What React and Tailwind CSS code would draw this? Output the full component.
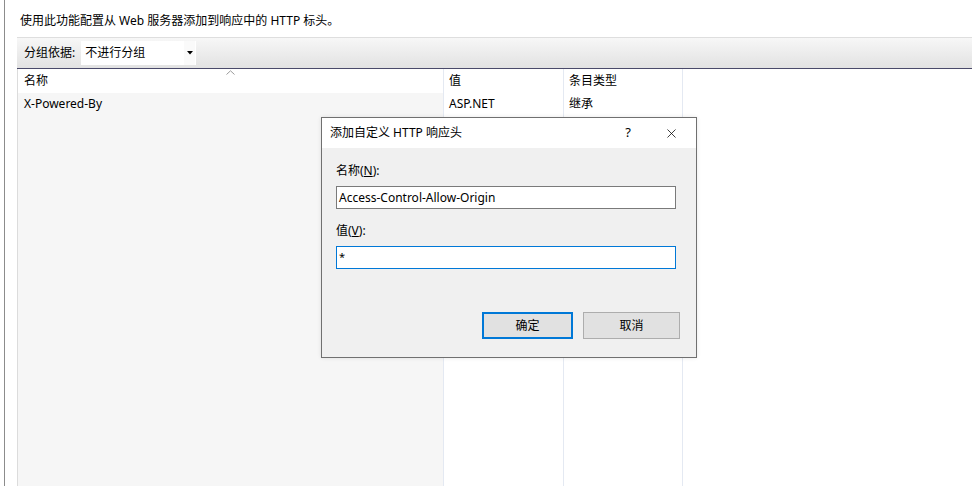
import { X } from "lucide-react";

const font = { fontFamily: '"Noto Sans", "Noto Sans CJK SC", sans-serif' };

function Dialog() {
  return (
    <div className="absolute left-[321px] top-[117px] w-[376px] h-[241px] border border-[#707070] bg-[#f0f0f0] flex flex-col shadow-[0_0_4px_rgba(0,0,0,0.1)]">
      {/* title bar */}
      <div className="h-[30px] bg-white flex items-center pl-[8px] text-[12px] text-black">
        <span className="flex-1">添加自定义 HTTP 响应头</span>
        <span className="w-[20px] text-center mr-[26px] text-[13px]">?</span>
        <X size={15} strokeWidth={1.2} className="mr-[17px]" />
      </div>
      <div className="flex-1 px-[14px] pt-[15px] text-[12px]">
        <div className="leading-[16px]">
          名称(<span className="underline">N</span>):
        </div>
        <div className="mt-[7px] h-[23px] w-[340px] bg-white border border-[#7a7a7a] flex items-center px-[2px]">
          Access-Control-Allow-Origin
        </div>
        <div className="mt-[14px] leading-[16px]">
          值(<span className="underline">V</span>):
        </div>
        <div className="mt-[7px] h-[23px] w-[340px] bg-white border border-[#0078d7] flex items-center px-[2px] text-[11px]">
          *
        </div>
        <div className="mt-[43px] flex justify-end gap-[10px] pr-[2px]">
          <button className="w-[91px] h-[27px] bg-[#e1e1e1] border-2 border-[#0078d7] text-[12px]">
            确定
          </button>
          <button className="w-[97px] h-[27px] bg-[#e1e1e1] border border-[#adadad] text-[12px]">
            取消
          </button>
        </div>
      </div>
    </div>
  );
}

export default function App() {
  return (
    <div className="w-[972px] h-[486px] bg-white relative overflow-hidden text-black" style={font}>
      <div className="ml-[4px] h-full border-l border-[#8c8c8c] flex flex-col">
        <div className="h-[37px] pl-[15px] pt-[12px] text-[12px] leading-[18px]">
          使用此功能配置从 Web 服务器添加到响应中的 HTTP 标头。
        </div>
        <div className="ml-[12px] flex-1 flex flex-col">
          {/* toolbar */}
          <div className="h-[32px] border-t border-[#dedede] border-b border-b-[#4a4a6a] bg-gradient-to-b from-[#f7f7f7] to-[#e2e2e2] flex items-center pl-[7px] text-[12px]">
            <span>分组依据:</span>
            <div className="ml-[6px] w-[115px] h-[24px] bg-white flex items-center">
              <span className="flex-1 pl-[4px]">不进行分组</span>
              <div className="w-[11px] h-full bg-[#fafafa] flex items-center justify-center mr-[1px]">
                <svg width="6" height="4" viewBox="0 0 6 4">
                  <path d="M0 0h6L3 3.5z" fill="#000" />
                </svg>
              </div>
            </div>
          </div>
          {/* list */}
          <div className="flex-1 flex border-l border-[#dcdcdc] text-[12px]">
            <div className="w-[425px] flex flex-col">
              <div className="h-[24px] bg-white flex items-center pl-[6px] relative">
                名称
                <svg className="absolute left-[208px] top-[1px]" width="9" height="5" viewBox="0 0 9 5">
                  <path d="M0.5 4.5L4.5 0.8L8.5 4.5" fill="none" stroke="#9a9a9a" strokeWidth="1" />
                </svg>
              </div>
              <div className="flex-1 bg-[#f6f6f6]">
                <div className="h-[22px] flex items-center pl-[6px]">X-Powered-By</div>
              </div>
            </div>
            <div className="w-[120px] flex flex-col border-l border-[#e4e9f2]">
              <div className="h-[24px] flex items-center pl-[5px]">值</div>
              <div className="h-[22px] flex items-center pl-[5px]">ASP.NET</div>
            </div>
            <div className="w-[120px] flex flex-col border-l border-[#e4e9f2] border-r">
              <div className="h-[24px] flex items-center pl-[5px]">条目类型</div>
              <div className="h-[22px] flex items-center pl-[5px]">继承</div>
            </div>
          </div>
        </div>
      </div>
      <Dialog />
    </div>
  );
}
